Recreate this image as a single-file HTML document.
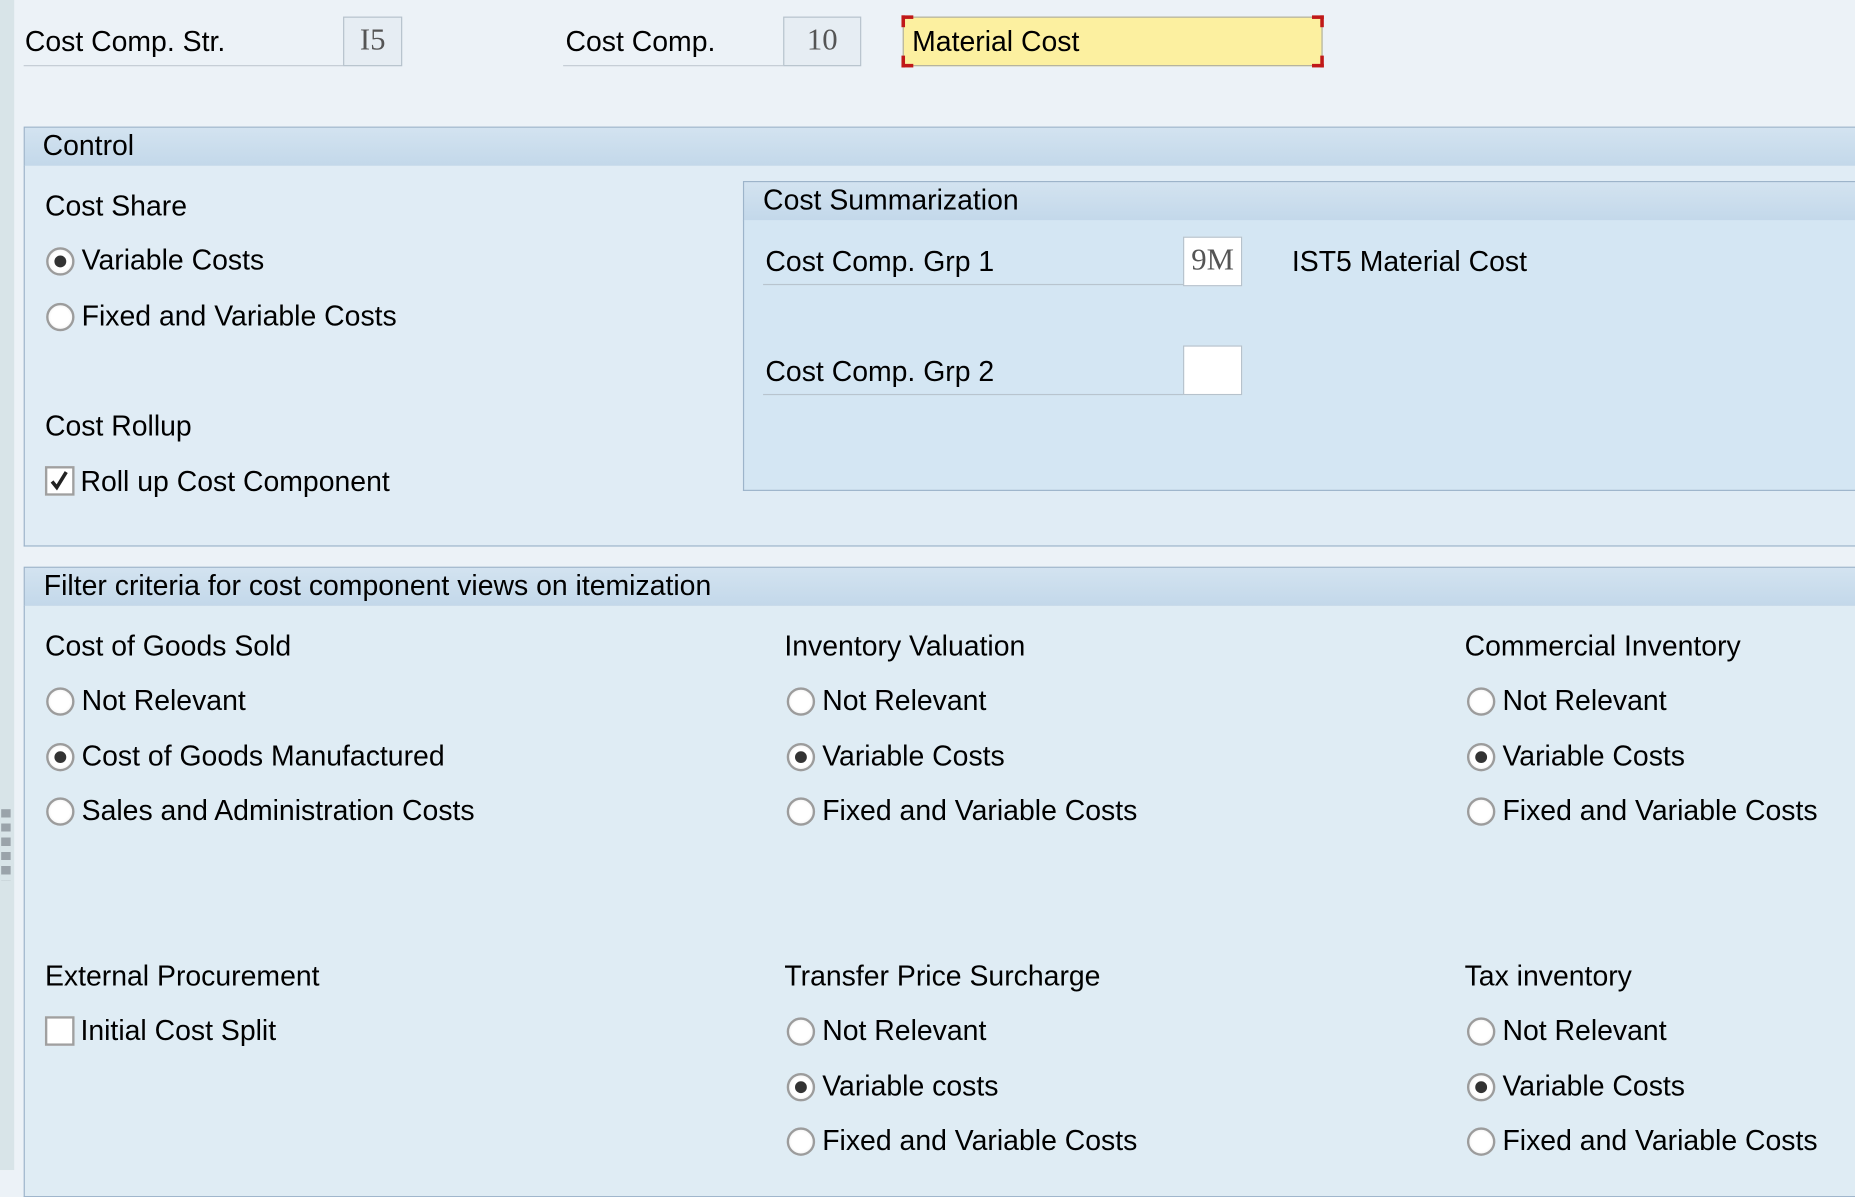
<!DOCTYPE html>
<html><head><meta charset="utf-8"><style>
html,body{margin:0;padding:0;width:1855px;height:1170px;overflow:hidden;background:#ecf2f7;}
#w{position:absolute;left:0;top:0;width:1568px;height:989px;transform:scale(1.18304);transform-origin:0 0;font-family:"Liberation Sans",sans-serif;font-size:24px;color:#000;}
.a{position:absolute;}
.t{position:absolute;white-space:nowrap;line-height:28px;transform:translateY(-14px);}
.ul{position:absolute;height:1px;background:#c3ccd4;}
.fld{position:absolute;box-sizing:border-box;border:1px solid #b6c2cc;background:#e6edf3;font-family:"Liberation Serif",serif;color:#555;font-size:26px;text-align:center;line-height:38px;}
.hdr{position:absolute;box-sizing:border-box;border:1px solid #9db4ca;background:linear-gradient(#d3e3f0,#c3d8ea);}
.body{position:absolute;box-sizing:border-box;border:1px solid #9db4ca;border-top:none;}
.r{position:absolute;width:24px;height:24px;box-sizing:border-box;border-radius:50%;border:2px solid #9c9c9c;background:radial-gradient(#fff 55%,#e6e6e6);transform:translate(-12px,-12px);}
.r.on::after{content:"";position:absolute;left:5px;top:5px;width:10px;height:10px;border-radius:50%;background:#333;}
.cb{position:absolute;width:25px;height:25px;box-sizing:border-box;border:2px solid #a0a0a0;background:#fff;}
</style></head><body><div id="w">
<div class="a" style="left:0;top:0;width:12px;height:989px;background:#d8e4e8"></div>
<div class="a" style="left:1;top:684px;width:8px;height:60px;background:repeating-linear-gradient(#9aa3aa 0 7px,transparent 7px 12px);left:1px"></div>

<div class="t" style="left:21px;top:36px">Cost Comp. Str.</div>
<div class="ul" style="left:20px;top:55px;width:270px"></div>
<div class="fld" style="left:290px;top:14px;width:50px;height:42px">I5</div>
<div class="t" style="left:478px;top:36px">Cost Comp.</div>
<div class="ul" style="left:476px;top:55px;width:186px"></div>
<div class="fld" style="left:662px;top:14px;width:66px;height:42px">10</div>
<div class="a" style="left:763px;top:14px;width:355px;height:42px;box-sizing:border-box;background:#fcf0a0;border:1px solid #b0b0a0"></div>
<div class="a" style="left:762px;top:13px;width:10px;height:10px;border-left:3px solid #c01818;border-top:3px solid #c01818;box-sizing:border-box"></div>
<div class="a" style="left:1109px;top:13px;width:10px;height:10px;border-right:3px solid #c01818;border-top:3px solid #c01818;box-sizing:border-box"></div>
<div class="a" style="left:762px;top:47px;width:10px;height:10px;border-left:3px solid #c01818;border-bottom:3px solid #c01818;box-sizing:border-box"></div>
<div class="a" style="left:1109px;top:47px;width:10px;height:10px;border-right:3px solid #c01818;border-bottom:3px solid #c01818;box-sizing:border-box"></div>
<div class="t" style="left:771px;top:36px">Material Cost</div>

<!-- Control -->
<div class="hdr" style="left:20px;top:107px;width:1560px;height:34px"></div>
<div class="t" style="left:36px;top:124px">Control</div>
<div class="body" style="left:20px;top:140px;width:1560px;height:322px;background:#e0ecf5"></div>
<div class="t" style="left:38px;top:175px">Cost Share</div>
<div class="r on" style="left:51px;top:221px"></div><div class="t" style="left:69px;top:221px">Variable Costs</div>
<div class="r" style="left:51px;top:268px"></div><div class="t" style="left:69px;top:268px">Fixed and Variable Costs</div>
<div class="t" style="left:38px;top:361px">Cost Rollup</div>
<div class="cb" style="left:38px;top:394px"><svg width="21" height="21" viewBox="0 0 21 21" style="position:absolute;left:0;top:0"><path d="M4 11 L8 16 L16 3" stroke="#222" stroke-width="3" fill="none"/></svg></div>
<div class="t" style="left:68px;top:408px">Roll up Cost Component</div>

<div class="hdr" style="left:628px;top:153px;width:960px;height:34px"></div>
<div class="t" style="left:645px;top:170px">Cost Summarization</div>
<div class="body" style="left:628px;top:186px;width:960px;height:229px;background:#d4e6f3"></div>
<div class="t" style="left:647px;top:222px">Cost Comp. Grp 1</div>
<div class="ul" style="left:645px;top:240px;width:355px;background:#b8c4ce"></div>
<div class="fld" style="left:1000px;top:200px;width:50px;height:42px;background:#fff">9M</div>
<div class="t" style="left:1092px;top:222px">IST5 Material Cost</div>
<div class="t" style="left:647px;top:315px">Cost Comp. Grp 2</div>
<div class="ul" style="left:645px;top:333px;width:355px;background:#b8c4ce"></div>
<div class="fld" style="left:1000px;top:292px;width:50px;height:42px;background:#fff"></div>

<!-- Filter -->
<div class="hdr" style="left:20px;top:479px;width:1560px;height:34px"></div>
<div class="t" style="left:37px;top:496px">Filter criteria for cost component views on itemization</div>
<div class="body" style="left:20px;top:512px;width:1560px;height:500px;background:#dfecf4"></div>

<div class="t" style="left:38px;top:547px">Cost of Goods Sold</div>
<div class="r" style="left:51px;top:593px"></div><div class="t" style="left:69px;top:593px">Not Relevant</div>
<div class="r on" style="left:51px;top:640px"></div><div class="t" style="left:69px;top:640px">Cost of Goods Manufactured</div>
<div class="r" style="left:51px;top:686px"></div><div class="t" style="left:69px;top:686px">Sales and Administration Costs</div>

<div class="t" style="left:663px;top:547px">Inventory Valuation</div>
<div class="r" style="left:677px;top:593px"></div><div class="t" style="left:695px;top:593px">Not Relevant</div>
<div class="r on" style="left:677px;top:640px"></div><div class="t" style="left:695px;top:640px">Variable Costs</div>
<div class="r" style="left:677px;top:686px"></div><div class="t" style="left:695px;top:686px">Fixed and Variable Costs</div>

<div class="t" style="left:1238px;top:547px">Commercial Inventory</div>
<div class="r" style="left:1252px;top:593px"></div><div class="t" style="left:1270px;top:593px">Not Relevant</div>
<div class="r on" style="left:1252px;top:640px"></div><div class="t" style="left:1270px;top:640px">Variable Costs</div>
<div class="r" style="left:1252px;top:686px"></div><div class="t" style="left:1270px;top:686px">Fixed and Variable Costs</div>

<div class="t" style="left:38px;top:826px">External Procurement</div>
<div class="cb" style="left:38px;top:859px"></div><div class="t" style="left:68px;top:872px">Initial Cost Split</div>

<div class="t" style="left:663px;top:826px">Transfer Price Surcharge</div>
<div class="r" style="left:677px;top:872px"></div><div class="t" style="left:695px;top:872px">Not Relevant</div>
<div class="r on" style="left:677px;top:919px"></div><div class="t" style="left:695px;top:919px">Variable costs</div>
<div class="r" style="left:677px;top:965px"></div><div class="t" style="left:695px;top:965px">Fixed and Variable Costs</div>

<div class="t" style="left:1238px;top:826px">Tax inventory</div>
<div class="r" style="left:1252px;top:872px"></div><div class="t" style="left:1270px;top:872px">Not Relevant</div>
<div class="r on" style="left:1252px;top:919px"></div><div class="t" style="left:1270px;top:919px">Variable Costs</div>
<div class="r" style="left:1252px;top:965px"></div><div class="t" style="left:1270px;top:965px">Fixed and Variable Costs</div>
</div></body></html>
